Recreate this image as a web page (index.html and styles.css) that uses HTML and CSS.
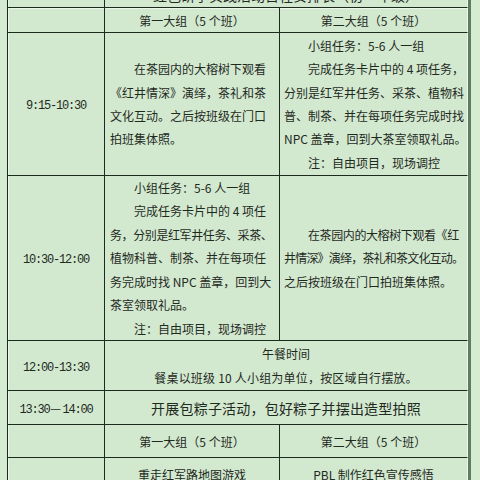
FILE: index.html
```html
<!DOCTYPE html>
<html lang="zh-CN">
<head>
<meta charset="utf-8">
<title>活动安排</title>
<link rel="stylesheet" href="styles.css">
</head>
<body>
<div class="page">
  <div class="sheet">
    <table class="plan">
      <colgroup><col class="c-time"><col class="c-a"><col class="c-b"></colgroup>
      <tr class="r-title">
        <td class="time"></td>
        <td class="title last" colspan="2">红色研学实践活动日程安排表（初一年级）</td>
      </tr>
      <tr class="r-head">
        <td class="time first-row"></td>
        <td class="head first-row">第一大组（5 个班）</td>
        <td class="head first-row last">第二大组（5 个班）</td>
      </tr>
      <tr class="r-a">
        <td class="time"><span class="num">9:15-10:30</span></td>
        <td class="txt">
          <div class="ln ind">在茶园内的大榕树下观看</div>
          <div class="ln">《红井情深》演绎，茶礼和茶</div>
          <div class="ln">文化互动。之后按班级在门口</div>
          <div class="ln">拍班集体照。</div>
        </td>
        <td class="txt b last">
          <div class="ln ind">小组任务：5-6 人一组</div>
          <div class="ln ind">完成任务卡片中的 4 项任务，</div>
          <div class="ln">分别是红军井任务、采茶、植物科</div>
          <div class="ln">普、制茶、并在每项任务完成时找</div>
          <div class="ln">NPC 盖章，回到大茶室领取礼品。</div>
          <div class="ln ind">注：自由项目，现场调控</div>
        </td>
      </tr>
      <tr class="r-b">
        <td class="time"><span class="num">10:30-12:00</span></td>
        <td class="txt">
          <div class="ln ind">小组任务：5-6 人一组</div>
          <div class="ln ind">完成任务卡片中的 4 项任</div>
          <div class="ln tight">务，分别是红军井任务、采茶、</div>
          <div class="ln">植物科普、制茶、并在每项任</div>
          <div class="ln">务完成时找 NPC 盖章，回到大</div>
          <div class="ln">茶室领取礼品。</div>
          <div class="ln ind">注：自由项目，现场调控</div>
        </td>
        <td class="txt b last">
          <div class="ln ind tight">在茶园内的大榕树下观看《红</div>
          <div class="ln tighter">井情深》演绎，茶礼和茶文化互动。</div>
          <div class="ln">之后按班级在门口拍班集体照。</div>
        </td>
      </tr>
      <tr class="r-lunch">
        <td class="time"><span class="num">12:00-13:30</span></td>
        <td class="center last" colspan="2">
          <div class="ln-s">午餐时间</div>
          <div class="ln-s wide">餐桌以班级 10 人小组为单位，按区域自行摆放。</div>
        </td>
      </tr>
      <tr class="r-zong">
        <td class="time"><span class="num">13:30</span><span class="dash">—</span><span class="num">14:00</span></td>
        <td class="center big last" colspan="2">开展包粽子活动，包好粽子并摆出造型拍照</td>
      </tr>
      <tr class="r-head2">
        <td class="time"></td>
        <td class="head">第一大组（5 个班）</td>
        <td class="head last">第二大组（5 个班）</td>
      </tr>
      <tr class="r-last">
        <td class="time"></td>
        <td class="head">重走红军路地图游戏</td>
        <td class="head last">PBL 制作红色宣传感悟</td>
      </tr>
    </table>
  </div>
</div>
</body>
</html>
```

FILE: styles.css
```css
html, body {
  margin: 0;
  padding: 0;
}

body {
  background: #d5ebd2;
  font-family: "Noto Sans CJK SC", "Noto Sans", sans-serif;
  font-size: 12px;
  color: #1f2a1f;
  overflow: hidden;
}

.page {
  padding-left: 7px;
  margin-top: -18px;
}

.sheet {
  display: inline-block;
  border-left: 1px solid #1d2b1d;
  border-right: 3px solid #5d7c61;
  background: #d3e9cf;
}

.plan {
  border-collapse: separate;
  border-spacing: 0;
  table-layout: fixed;
  width: 460px;
}

.plan td {
  box-sizing: border-box;
  padding: 0;
  vertical-align: middle;
  border-right: 1px solid #1d2b1d;
  border-bottom: 1px solid #1d2b1d;
  white-space: nowrap;
  overflow: hidden;
}

.plan td.last {
  border-right: 1px solid #eaf6e7;
}

.plan td.time {
  box-shadow: inset 1px 0 0 #eaf6e7;
  text-align: center;
}

.plan td.first-row {
  box-shadow: inset 0 1px 0 #eaf6e7;
}

.plan td.time.first-row {
  box-shadow: inset 1px 1px 0 #eaf6e7;
}

.c-time { width: 97px; }
.c-a { width: 175px; }
.c-b { width: 188px; }

.r-title { height: 26px; }
.r-head { height: 25px; }
.r-a { height: 143px; }
.r-b { height: 165px; }
.r-lunch { height: 50px; }
.r-zong { height: 34px; }
.r-head2 { height: 33px; }
.r-last { height: 34px; }

.title {
  text-align: center;
  font-size: 14px;
  line-height: 16px;
  vertical-align: top !important;
  padding-top: 5px !important;
}

.head {
  text-align: center;
}

.num {
  font-family: "Liberation Mono", monospace;
  font-size: 12px;
  letter-spacing: -1.2px;
}

.dash {
  display: inline-block;
  width: 12px;
  font-family: "Noto Sans CJK SC", sans-serif;
  margin-right: 1px;
}

.txt {
  padding: 0 0 0 5px !important;
  text-align: left;
}

.txt.b {
  padding-left: 4px !important;
}

.ln {
  line-height: 23.4px;
}

.ln.ind {
  padding-left: 24px;
}

.ln.tight {
  letter-spacing: -0.4px;
}

.ln.tighter {
  letter-spacing: -0.8px;
}

.center {
  text-align: center;
}

.ln-s {
  line-height: 24px;
}

.ln-s.wide {
  letter-spacing: 0.2px;
}

.big {
  font-size: 14px;
  letter-spacing: 0.2px;
}
```
